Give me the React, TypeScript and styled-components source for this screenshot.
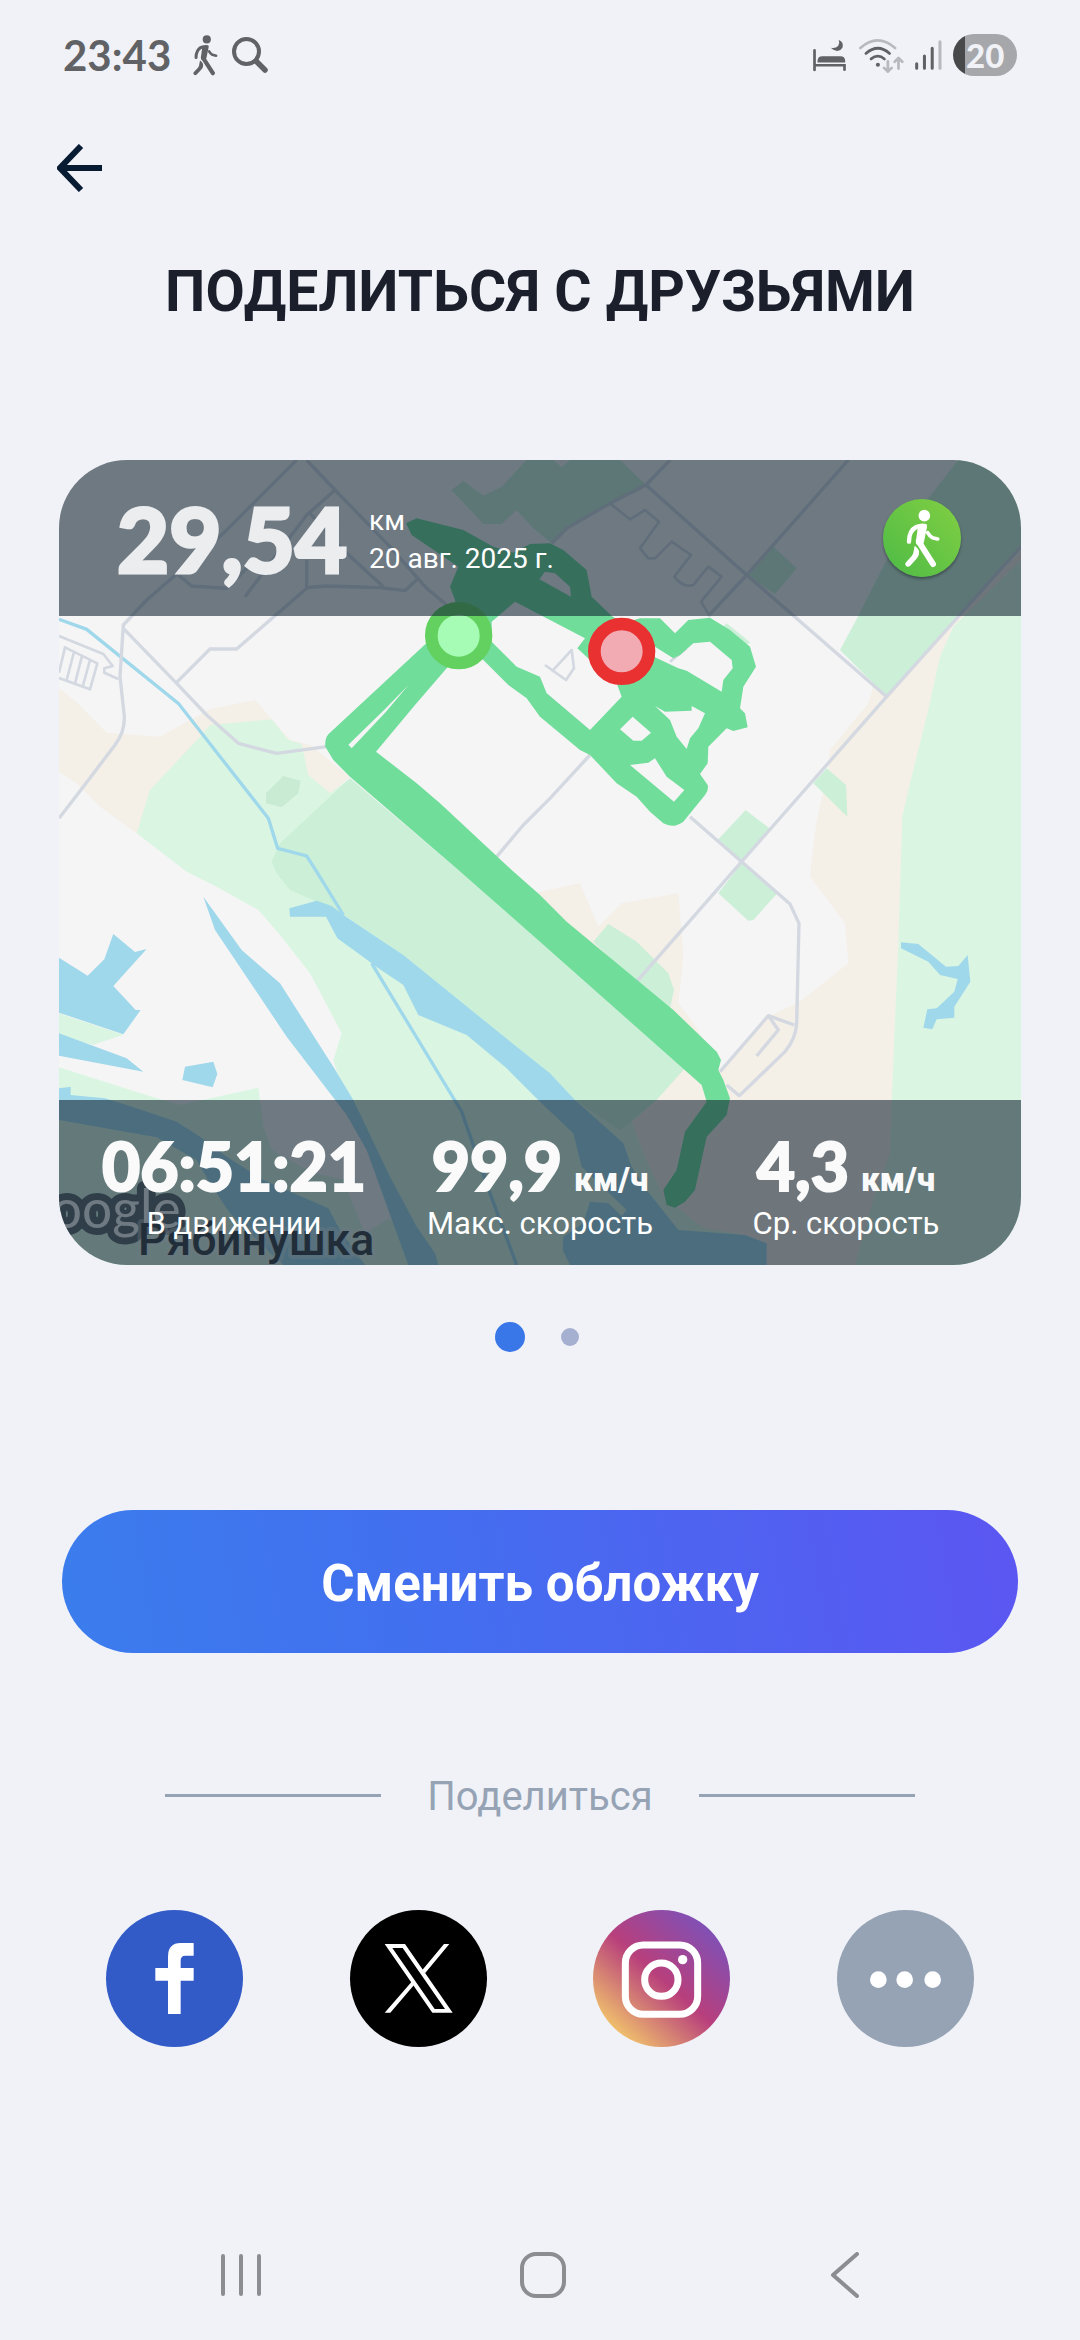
import React from "react";
import styled, { createGlobalStyle } from "styled-components";

const GlobalStyle = createGlobalStyle`
  *, *::before, *::after { box-sizing: border-box; }
  body { margin: 0; background: #f0f2f7; font-family: Roboto, "Noto Sans", sans-serif; }
  button { border: 0; padding: 0; margin: 0; background: none; font: inherit; color: inherit; cursor: pointer; }
  svg { display: block; }
`;

const Page = styled.div`
  min-height: 100vh;
  display: flex;
  flex-direction: column;
  background: #f0f2f7;
`;

/* ---------- status bar ---------- */

const StatusBar = styled.header`
  height: 110px;
  padding: 0 63px;
  display: flex;
  align-items: center;
  justify-content: space-between;
  color: #616265;
`;

const StatusGroup = styled.div<{ $gap: number }>`
  display: flex;
  align-items: center;
  gap: ${(p) => p.$gap}px;
`;

const Clock = styled.time`
  font: 700 42px/48px Lato, sans-serif;
  margin-right: 8px;
`;

const Battery = styled.span`
  width: 64px;
  height: 42px;
  padding-left: 13px;
  border-radius: 21px;
  background: linear-gradient(to right, #48494b 12px, #a6a7ab 12px);
  color: #f0f2f7;
  font: 900 33px/42px Lato, sans-serif;
`;

/* ---------- heading ---------- */

const TopBar = styled.nav`
  height: 116px;
  padding: 0 57px;
  display: flex;
  align-items: center;
`;

const Title = styled.h1`
  margin: 30px 40px 0;
  color: #1b1f2c;
  text-align: center;
  font-size: 57px;
  line-height: 72px;
  font-weight: 700;
`;

/* ---------- cover card ---------- */

const Card = styled.section`
  position: relative;
  margin: 132px 59px 0;
  aspect-ratio: 962 / 805;
  border-radius: 68px;
  overflow: hidden;
  display: flex;
  flex-direction: column;
  justify-content: space-between;
  color: #fff;
`;

const MapArt = styled.svg`
  position: absolute;
  inset: 0;
  width: 100%;
  height: 100%;
`;

const Band = styled.div`
  position: relative;
  background: rgba(15, 34, 49, 0.59);
`;

const Summary = styled(Band)`
  height: 156px;
  padding: 0 60px 0 58px;
  display: flex;
  align-items: center;
`;

const Distance = styled.strong`
  color: #ecedef;
  font: 900 90px/108px Lato, sans-serif;
  -webkit-text-stroke: 3px currentColor;
`;

const SummaryMeta = styled.div`
  flex: 1;
  margin-left: 22px;
  padding-top: 4px;
  font-size: 28px;
  line-height: 38px;
`;

const ActivityBadge = styled.span`
  width: 78px;
  height: 78px;
  border-radius: 50%;
  background: linear-gradient(to top right, #4dbb47, #82cf42);
  box-shadow: 0 2px 3px rgba(0, 0, 0, 0.35);
`;

const Stats = styled(Band)`
  height: 165px;
  padding: 28px 22px 0;
  display: grid;
  grid-template-columns: repeat(3, 1fr);
  text-align: center;
`;

const StatValue = styled.div`
  color: #fafafa;
  font: 900 66px/76px Lato, sans-serif;
  white-space: nowrap;
  -webkit-text-stroke: 2px currentColor;
`;

const Unit = styled.span`
  margin-left: 12px;
  font: 900 33px/40px Roboto, sans-serif;
  -webkit-text-stroke: 0;
`;

const StatLabel = styled.div`
  font-size: 31px;
  line-height: 40px;
`;

/* ---------- pager and actions ---------- */

const Pager = styled.div`
  margin-top: 42px;
  display: flex;
  justify-content: center;
`;

const PageButton = styled.button`
  width: 60px;
  height: 60px;
  display: grid;
  place-items: center;
`;

const Dot = styled.span<{ $active?: boolean }>`
  width: ${(p) => (p.$active ? 30 : 18)}px;
  height: ${(p) => (p.$active ? 30 : 18)}px;
  border-radius: 50%;
  background: ${(p) => (p.$active ? "#3976e8" : "#a5b0d0")};
`;

const ActionArea = styled.div`
  margin: 143px 62px 0;
  display: grid;
`;

const CoverButton = styled.button`
  height: 143px;
  padding-top: 4px;
  border-radius: 72px;
  background: linear-gradient(80deg, #3b7ded, #426fef 38%, #5c56f2);
  color: #fff;
  font-size: 51px;
  line-height: 60px;
  font-weight: 700;
`;

const Divider = styled.div`
  margin: 117px 165px 0;
  display: flex;
  align-items: center;
  justify-content: space-between;
  color: #96a3b5;
  font-size: 40px;
  line-height: 48px;
`;

const DividerLabel = styled.span`
  padding-top: 3px;
`;

const Rule = styled.span`
  width: 216px;
  height: 3px;
  background: #96a3b5;
`;

const ShareRow = styled.div`
  margin: 89px 106px 48px;
  display: flex;
  justify-content: space-between;
`;

const ShareButton = styled.button<{ $fill: string }>`
  width: 137px;
  height: 137px;
  border-radius: 50%;
  background: ${(p) => p.$fill};
`;

const SystemNav = styled.nav`
  height: 130px;
  margin-top: auto;
  padding: 0 84px 0 90px;
  display: grid;
  grid-template-columns: repeat(3, 1fr);
`;

const NavButton = styled.button`
  display: grid;
  place-items: center;
`;

/* ---------- drawings ---------- */

const Walker = ({ box, width, height }: { box: string; width: number; height: number }) => (
  <svg viewBox={box} width={width} height={height} fill="none" stroke="currentColor" strokeLinecap="round" strokeLinejoin="round" aria-hidden="true">
    <circle cx="1152" cy="198" r="17.500" fill="currentColor" stroke="none" />
    <path d="M1128 232Q1106 243 1106 276" strokeWidth="13" />
    <path d="M1118 231Q1138 218 1158 223Q1161 226 1160 232L1151 276L1146 290L1128 284Q1124 276 1128 266L1132 236Z" fill="currentColor" stroke="none" />
    <path d="M1136 277L1178 343" strokeWidth="18" />
    <path d="M1123 288Q1132 294 1136 303L1136 314Q1134 321 1128 328L1109 349Q1102 354 1097 349Q1092 343 1097 338L1115 318Q1120 311 1120 304Z" fill="currentColor" stroke="none" />
    <path d="M1162 249Q1168 260 1176 264L1192 268" strokeWidth="11" />
  </svg>
);

const BedIcon = () => (
  <svg viewBox="784 116 101 98" width="35" height="33" fill="none" stroke="currentColor" strokeWidth="8" strokeLinecap="round" aria-hidden="true">
    <path d="M790 150V208M790 194H879V207" />
    <path d="M799 186V180Q800 167 813 167H867Q880 167 881 180V186Z" fill="currentColor" stroke="none" />
    <path d="M838 142Q852 145 860 137Q866 128 862 119Q878 126 873 142Q860 162 838 142Z" fill="currentColor" stroke="none" />
  </svg>
);

const WifiIcon = () => (
  <svg viewBox="920 112 134 102" width="46" height="35" fill="none" stroke="#616265" strokeWidth="8" strokeLinecap="round" strokeLinejoin="round" aria-hidden="true">
    <path d="M927 141Q977 97 1028 141" stroke="#b8b9be" />
    <path d="M943 157Q978 127 1012 157M958 173Q978 157 997 173" />
    <circle cx="978" cy="190" r="6" fill="#616265" stroke="none" />
    <path d="M1007 180V209M996 199L1007 210L1018 199M1038 201V171M1027 181L1038 170L1049 181" stroke="#b8b9be" />
  </svg>
);

const SignalIcon = () => (
  <svg viewBox="1080 120 80 88" width="27" height="30" fill="none" stroke="#616265" strokeWidth="9" strokeLinecap="round" aria-hidden="true">
    <path d="M1085 190V203M1108 167V203M1131 144V203" />
    <path d="M1154 125V203" stroke="#b8b9be" />
  </svg>
);

const SearchIcon = () => (
  <svg viewBox="0 0 36 36" width="36" height="36" fill="none" stroke="currentColor" strokeLinecap="round" aria-hidden="true">
    <circle cx="14.500" cy="14.500" r="12.500" strokeWidth="4" />
    <path d="M24 24L33 33" strokeWidth="5.500" />
  </svg>
);

const WATER = "#a0d8eb";
const LAWN = "#daf6e3";
const PARK = "#cbefd7";
const SAND = "#f4efe7";
const TRACK = "#71dd9b";

const RouteMap = () => (
  <MapArt viewBox="27 30 2886 2415" preserveAspectRatio="xMidYMid slice" role="img" aria-label="Карта маршрута">
    <rect x="27" y="30" width="2886" height="2415" fill="#f5f5f5" />

    {/* sand and greenery */}
    <path fill={SAND} d="M27 715L80 757L170 848L330 860L420 810L480 778L615 750L720 870L780 885L900 980L840 1035L260 1150L150 1070L80 1000L27 965Z" />
    <path fill={LAWN} d="M480 825L665 808L715 870L755 882L775 975L840 1030L900 985L1500 1500L1900 1900L2100 2445L1100 2445L1000 2200L890 1960L850 1830L875 1750L780 1570L690 1455L625 1380L500 1310L410 1265L260 1150L300 1020L450 860Z" />
    <path fill={PARK} d="M900 985L690 1180L665 1235L680 1270L720 1320L800 1355L890 1400L1060 1515L1350 1750L1500 1870L1575 1950L1710 2040L1820 1950L1920 1850Z" />
    <path fill="#c9ebd3" d="M648 1030L700 978L752 992L745 1030L695 1072L648 1060Z" />
    <path fill={SAND} d="M1400 1340L1470 1325L1590 1300L1645 1430L1715 1360L1885 1330L1900 1520L1885 1660L1930 1720L1980 1800L1900 1800Z" />
    <path fill={SAND} d="M2740 480L2510 740L2470 710L2455 760L2340 900L2335 960L2300 1110L2285 1230L2280 1280L2340 1360L2385 1420L2395 1540L2250 1655L2155 1700L2010 1860L1970 1800L1900 1860L1820 1950L1745 2015L1780 2110L1840 2240L1960 2335L2085 2355L2150 2380V2445H2440L2600 2200L2913 500V300Z" />
    <path fill={PARK} d="M2600 190L2725 30H2913V290L2510 740L2370 600L2425 498L2510 330Z" />
    <path fill={LAWN} d="M2913 330L2740 500L2710 530L2670 620L2630 800L2580 1000L2557 1100L2553 1230L2545 1480L2530 1830L2520 2110L2470 2250L2415 2445H2913Z" />
    <path fill={PARK} d="M1205 120L1240 93L1300 137L1355 110L1430 30H1510L1535 52L1560 30H1710L1788 105L1680 160L1550 235L1505 280L1450 235L1400 180L1355 222H1300Z" />
    <path fill={PARK} d="M2170 290L2240 355L2175 432L2095 378ZM2330 955L2388 1005L2392 1100L2290 1000ZM2087 1080L2158 1135L2075 1235L2005 1168ZM2075 1240L2182 1330L2110 1410L2095 1412L2005 1330ZM2030 520L2100 577L2085 590L2010 540Z" />
    <path fill={PARK} d="M1675 1422L1760 1475L1855 1570L1872 1620L1860 1675L1800 1640L1630 1475Z" />
    <path fill={LAWN} d="M27 1690L220 1754L130 1784L27 1760ZM27 1852L320 1945L390 1965L625 1913L640 2030L665 2100L790 2170L890 2190L930 2300L1030 2310L1100 2445H27Z" />
    <path fill="#f5f5f5" d="M895 2230L890 1990L950 2100L1025 2300L945 2350Z" />

    {/* water */}
    <g fill={WATER}>
      <path d="M718 1375L800 1352L845 1368L890 1402L1060 1515L1350 1750L1500 1870L1575 1950L1720 2080L1745 2150L1790 2220L1885 2340L2085 2355L2150 2380V2445H1560L1538 2400L1540 2360L1600 2320L1620 2255L1675 2260L1715 2298L1730 2280L1595 2150L1570 2050L1470 1955L1370 1855L1250 1755L1105 1695L1085 1655L1060 1605L975 1548L945 1525L862 1465L828 1400H720Z" />
      <path d="M460 1340L575 1500L690 1600L850 1850L910 1950L1020 2180L1100 2330L1155 2410L1165 2445H1075L950 2100L890 1995L710 1760L495 1440Z" />
      <path d="M27 1523L113 1577L163 1528L190 1452L255 1506L290 1497L190 1608L257 1680H272L220 1753L27 1688Z" />
      <path d="M27 1750L230 1825L280 1865L27 1817Z" />
      <path d="M405 1850L490 1835L502 1872L488 1912L397 1890Z" />
      <path d="M27 1915L62 1910V1935L165 1945L230 1965L380 2015L450 2060L530 2120L640 2190L835 2275L870 2340L945 2445H700L600 2350L540 2290L480 2200L440 2130L320 2062L27 2010Z" />
      <path transform="translate(1470 1230)" d="M1083 247L1135 252L1218 320L1255 318L1283 285L1291 365L1243 440V473L1190 478L1177 508L1150 503L1162 448L1190 445L1243 395L1253 357L1200 345L1165 305L1083 265Z" />
    </g>
    <path fill="none" stroke={WATER} strokeWidth="10" d="M27 508L110 538L385 760L655 1105L683 1195L770 1218L800 1265L880 1395M965 1540L1235 1985L1320 2230L1400 2445" />

    {/* roads */}
    <g fill="none" stroke="#d3d8e1" strokeWidth="10" strokeLinejoin="round">
      <path d="M740 30L520 250L290 450L220 525L210 680L222 790Q228 840 195 885L100 1010L27 1105" />
      <path d="M770 30L855 120L1020 290L1130 415L1190 465M855 120L770 195L585 440M780 190L880 300L1000 410M770 330V415L560 597H480L380 697" />
      <path d="M770 413L830 408L990 413L1065 422L1105 385M385 375L425 408L530 415L600 345" />
      <path d="M220 535L380 700L470 795L565 880L680 910L830 890" />
      <path d="M27 558L160 612L188 648L163 655V668L205 687M27 668L45 592L142 640L120 718L27 684M72 606L50 690M96 618L75 700M120 630L98 710" strokeWidth="8" />
      <path d="M1340 1220L1420 1125L1500 1045L1620 915" />
      <g transform="translate(1470 0)">
        <path d="M390 30L318 105L210 160L80 235L35 280M318 105L620 375L1040 740M925 30L620 375L505 498M1443 290L1040 740L605 1235L290 1595M605 1235L450 1100" />
        <path d="M210 160L270 208L315 180L357 215L300 295L325 325H345L395 275L453 315L403 380Q430 415 460 405L505 350L545 380L483 455L510 500" strokeWidth="8" />
        <path d="M15 645L78 690L102 655L95 600L35 665M20 735L150 845M390 635L440 595" strokeWidth="8" />
        <path d="M605 1235L750 1362L777 1420L770 1720Q768 1765 735 1805L598 1937L560 1905M540 1865L685 1697L763 1725M685 1697L715 1740L650 1818" />
      </g>
    </g>

    {/* recorded track */}
    <g fill={TRACK} fillRule="evenodd">
      <path d="M1150 560L835 853Q824 865 826 890L850 930L900 980L1225 1260L1470 1475L1955 1905L1970 1955L1905 2045L1880 2160L1840 2220L1850 2265L1875 2273L1905 2255L1935 2220L1970 2060L2030 1995L2040 1945L2020 1890L2005 1860L2013 1830L2000 1805L1870 1680L1550 1415L1470 1335L1385 1260L1170 1060L1100 1000L978 905L1095 765L1190 655L1240 600ZM1075 706L1000 782L895 884L905 895L1008 785Z" />
      <path
        d="M1068 220L1100 205L1240 240L1330 290L1390 308L1440 282L1500 280L1540 300L1610 360L1625 440L1685 498L1720 520L1770 505L1830 505L1875 550L1915 510L1980 503L2040 540L2100 590L2118 650L2080 710L2070 775L2085 790L2093 832L2050 843L2030 835L1975 890L1973 940L1950 972L1973 1005Q1977 1020 1965 1035L1900 1115Q1870 1137 1840 1120L1800 1085L1760 1040L1700 1000L1620 915L1590 900L1470 800L1430 745L1375 705L1300 630L1228 557L1215 450L1200 410L1225 350L1085 255Z
        M1325 515L1395 455L1500 510L1605 565L1582 595L1620 630L1700 700L1715 740L1620 840L1490 730L1470 680L1400 650L1325 575Z
        M1468 388L1485 365L1515 370L1560 410L1563 440Z
        M1815 590L1870 625L1890 615L1930 580L1980 575L2045 630L2048 655L2020 690L2015 725L1910 662L1885 655L1815 622Z
        M1815 768L1845 785L1925 782V768L1965 790L1945 835L1920 865L1910 897L1880 860L1860 810Z
        M1748 800L1803 848L1775 872H1750L1710 838Z
        M1815 925L1850 980L1903 1020L1872 1055L1740 945L1795 938Z"
      />
    </g>
    <circle cx="1226" cy="557" r="82" fill="#a6fcb5" stroke="#63d15f" strokeWidth="38" />
    <circle cx="1715" cy="604" r="82" fill="#f2aab3" stroke="#e93131" strokeWidth="38" />

    {/* map captions */}
    <text x="392" y="2334" textAnchor="end" fontFamily="Lato, sans-serif" fontSize="160" fill="#f5f5f5" stroke="#5d666b" strokeWidth="42" strokeLinejoin="round" paintOrder="stroke">Google</text>
    <text x="264" y="2415" fontFamily="Roboto, sans-serif" fontSize="134" fontWeight="500" fill="#3a4148" stroke="#f5f5f5" strokeOpacity="0.4" strokeWidth="22" strokeLinejoin="round" paintOrder="stroke">Рябинушка</text>
  </MapArt>
);

const stats = [
  { value: "06:51:21", label: "В движении" },
  { value: "99,9", unit: "км/ч", label: "Макс. скорость" },
  { value: "4,3", unit: "км/ч", label: "Ср. скорость" },
];

export default function App() {
  return (
    <Page>
      <GlobalStyle />
      <StatusBar>
        <StatusGroup $gap={14}>
          <Clock>23:43</Clock>
          <Walker box="1094 179 105 176" width={25} height={41} />
          <SearchIcon />
        </StatusGroup>
        <StatusGroup $gap={11}>
          <BedIcon />
          <WifiIcon />
          <SignalIcon />
          <Battery>20</Battery>
        </StatusGroup>
      </StatusBar>

      <TopBar>
        <button type="button" aria-label="Назад">
          <svg viewBox="0 0 46 48" width="46" height="48" fill="none" stroke="#071b33" strokeWidth="6" aria-hidden="true">
            <path d="M24 2L3 24L24 46M4 24H45" />
          </svg>
        </button>
      </TopBar>

      <main>
        <Title>ПОДЕЛИТЬСЯ С ДРУЗЬЯМИ</Title>

        <Card>
          <RouteMap />
          <Summary>
            <Distance>29,54</Distance>
            <SummaryMeta>
              <div>км</div>
              <div>20 авг. 2025 г.</div>
            </SummaryMeta>
            <ActivityBadge>
              <Walker box="1028 148 234 234" width={78} height={78} />
            </ActivityBadge>
          </Summary>
          <Stats>
            {stats.map((s) => (
              <div key={s.label}>
                <StatValue>
                  {s.value}
                  {s.unit && <Unit>{s.unit}</Unit>}
                </StatValue>
                <StatLabel>{s.label}</StatLabel>
              </div>
            ))}
          </Stats>
        </Card>

        <Pager>
          <PageButton type="button" aria-label="Обложка 1"><Dot $active /></PageButton>
          <PageButton type="button" aria-label="Обложка 2"><Dot /></PageButton>
        </Pager>

        <ActionArea>
          <CoverButton type="button">Сменить обложку</CoverButton>
        </ActionArea>

        <Divider>
          <Rule />
          <DividerLabel>Поделиться</DividerLabel>
          <Rule />
        </Divider>

        <ShareRow>
          <ShareButton type="button" $fill="#325bc8" aria-label="Facebook">
            <svg viewBox="138 150 411 411" fill="#fff" aria-hidden="true">
              <path d="M324 462V362H286V324H324V290Q324 249 362 249H401V287H376Q362 287 362 301V324H401V362H362V462Z" />
            </svg>
          </ShareButton>
          <ShareButton type="button" $fill="#000" aria-label="X">
            <svg viewBox="870 150 411 411" fill="#fff" fillRule="evenodd" aria-hidden="true">
              <path d="M974 252H1035L1178 458H1117ZM997 264L1124 447H1155L1028 264Z" />
              <path d="M1152 252H1168L1095 340L1087 330ZM974 458H991L1062 375L1055 365Z" />
            </svg>
          </ShareButton>
          <ShareButton type="button" $fill="linear-gradient(42deg, #f0c06c 14%, #b83f7c 50%, #7a52bc 90%)" aria-label="Instagram">
            <svg viewBox="159 150 411 411" fill="none" stroke="#fff" strokeWidth="21" aria-hidden="true">
              <rect x="256" y="255" width="217" height="208" rx="54" />
              <circle cx="364" cy="359" r="50" />
              <circle cx="428" cy="299" r="14" fill="#fff" stroke="none" />
            </svg>
          </ShareButton>
          <ShareButton type="button" $fill="#96a3b5" aria-label="Ещё">
            <svg viewBox="891 150 411 411" fill="#fff" aria-hidden="true">
              <circle cx="1015" cy="359" r="25" />
              <circle cx="1094" cy="359" r="25" />
              <circle cx="1178" cy="359" r="25" />
            </svg>
          </ShareButton>
        </ShareRow>
      </main>

      <SystemNav>
        <NavButton type="button" aria-label="Недавние">
          <svg viewBox="0 0 42 44" width="42" height="44" stroke="#8c8d91" strokeWidth="4" strokeLinecap="round" aria-hidden="true">
            <path d="M3 3V41M21 3V41M39 3V41" />
          </svg>
        </NavButton>
        <NavButton type="button" aria-label="Домой">
          <svg viewBox="0 0 46 46" width="46" height="46" fill="none" stroke="#8c8d91" strokeWidth="4" aria-hidden="true">
            <rect x="2" y="2" width="42" height="42" rx="14" />
          </svg>
        </NavButton>
        <NavButton type="button" aria-label="Назад в системе">
          <svg viewBox="0 0 30 46" width="30" height="46" fill="none" stroke="#8c8d91" strokeWidth="4" strokeLinecap="round" strokeLinejoin="round" aria-hidden="true">
            <path d="M27 2L3 23L27 44" />
          </svg>
        </NavButton>
      </SystemNav>
    </Page>
  );
}
